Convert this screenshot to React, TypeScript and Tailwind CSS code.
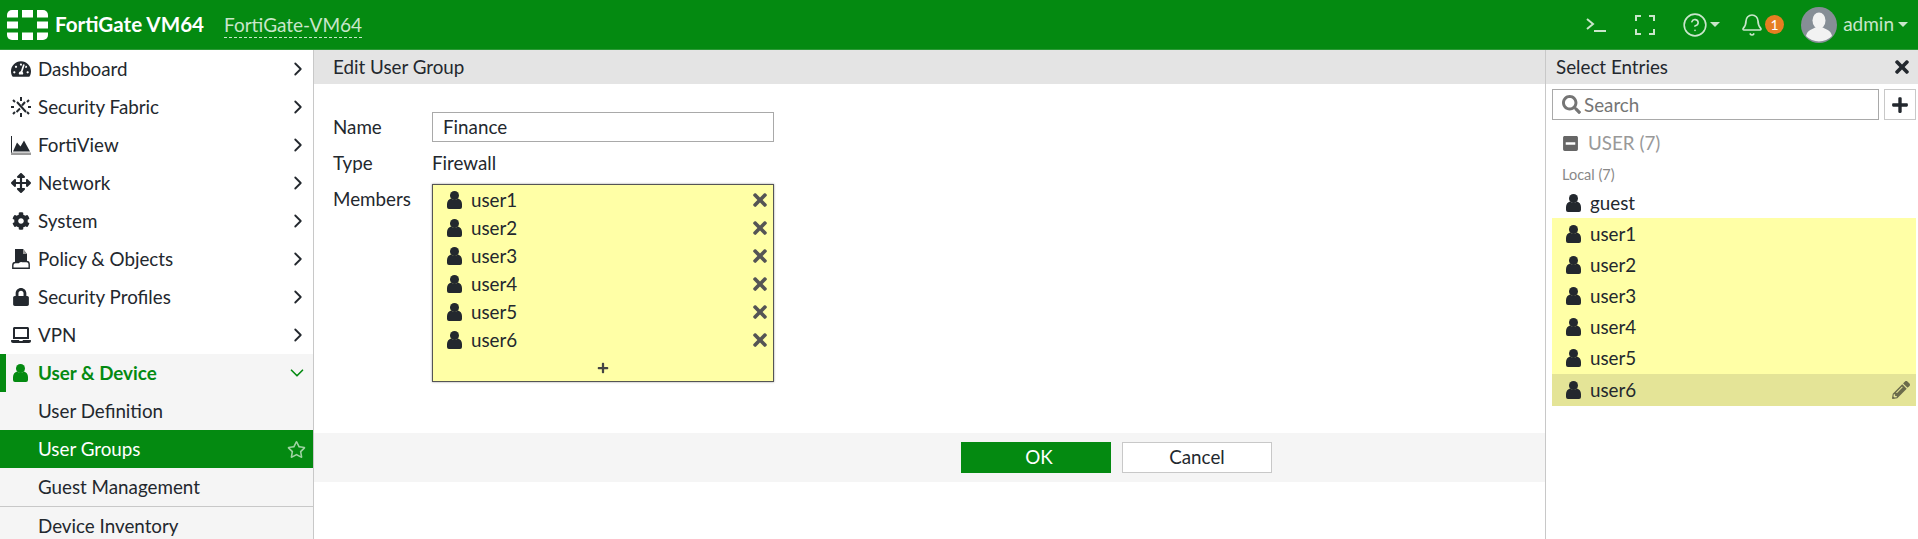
import {
  FaCog,
  FaLaptop,
  FaLock,
  FaMinusSquare,
  FaPencilAlt,
  FaPlus,
  FaSearch,
  FaTachometerAlt,
  FaTimes,
  FaArrowsAlt,
  FaRegStar,
} from 'react-icons/fa'
import { Bell, ChevronDown, ChevronRight, CircleHelp } from 'lucide-react'
import type { ReactNode } from 'react'

const users = ['user1', 'user2', 'user3', 'user4', 'user5', 'user6']

function Logo() {
  return (
    <svg width="41" height="30" viewBox="0 0 41 30" fill="#fff">
      <path d="M0 7.500V5a5 5 0 0 1 5-5h6v7.500z" />
      <rect x="15" y="0" width="11" height="7.500" />
      <path d="M30 0h6a5 5 0 0 1 5 5v2.500H30z" />
      <rect x="0" y="11.500" width="11" height="7" />
      <rect x="30" y="11.500" width="11" height="7" />
      <path d="M0 22.500h11V30H5a5 5 0 0 1-5-5z" />
      <rect x="15" y="22.500" width="11" height="7.500" />
      <path d="M30 22.500h11V25a5 5 0 0 1-5 5h-6z" />
    </svg>
  )
}

function UserIcon() {
  return (
    <svg width="15" height="18" viewBox="0 0 15 18" fill="currentColor" className="shrink-0">
      <circle cx="7.500" cy="4.500" r="4.500" />
      <path d="M0 16v-3c0-3 2-5 4-5.500 1 .8 2.200 1.200 3.500 1.200s2.500-.4 3.500-1.200c2 .5 4 2.500 4 5.500v3a2 2 0 0 1-2 2H2a2 2 0 0 1-2-2z" />
    </svg>
  )
}

function FabricIcon() {
  return (
    <svg width="20" height="20" viewBox="0 0 20 20" stroke="#23282e" strokeWidth="2" fill="none">
      <path d="M10 0v4M10 16v4M0 10h3M17 10h3M2 3l2 2M18 3l-2 2M2 17l2-2M18 17l-2-2M6 5l9 10M14 5l-3 3.500M9 11.500L5.500 15" />
    </svg>
  )
}

function AreaIcon() {
  return (
    <svg width="20" height="19" viewBox="0 0 20 19" fill="#23282e">
      <path d="M0 0h1v17H0z" />
      <path d="M0 16.500h20V19H0z" fill="#9a9a9a" />
      <path d="M2 15.500l4-9 3.500 4 3.500-6 6 11z" />
    </svg>
  )
}

function PolicyIcon() {
  return (
    <svg width="18" height="20" viewBox="0 0 18 20">
      <path d="M3 0h8l4 5v8H3z" fill="#23282e" />
      <path d="M11 0l4 5h-4z" fill="#9a9a9a" />
      <path d="M.8 19.200v-3q0-2.700 2.700-2.700h3q2-2 4-1h4q2.700 0 2.700 2.700v4z" fill="#fff" stroke="#23282e" strokeWidth="1.400" />
      <path d="M3 13h4q2-2 4-1h4v-2H3z" fill="#23282e" />
    </svg>
  )
}

function Avatar() {
  return (
    <svg width="36" height="36" viewBox="0 0 36 36" className="shrink-0">
      <circle cx="18" cy="18" r="18" fill="#868e96" />
      <ellipse cx="18" cy="13.500" rx="6.500" ry="8" fill="#f2f2f2" />
      <path d="M5 29c1-6 7-7 10-9h6c3 2 9 3 10 9a18 18 0 0 1-26 0z" fill="#f2f2f2" />
    </svg>
  )
}

function Caret() {
  return <span className="ml-[4px] h-0 w-0 border-x-[5px] border-t-[5px] border-x-transparent border-t-[#c9e6cb]" />
}

function NavRow({ icon, label }: { icon: ReactNode; label: string }) {
  return (
    <div className="flex h-[38px] items-center pr-[4px] pl-[11px]">
      <span className="flex w-[20px] justify-center">{icon}</span>
      <span className="ml-[7px] flex-1">{label}</span>
      <ChevronRight size={22} strokeWidth={2} />
    </div>
  )
}

function SubRow({ label, active }: { label: string; active?: boolean }) {
  return (
    <div className={active ? 'flex h-[38px] items-center bg-[#048a11] pr-[7px] pl-[38px] text-white' : 'flex h-[38px] items-center pl-[38px]'}>
      <span className="flex-1">{label}</span>
      {active && <FaRegStar size={19} className="text-[#9fd3a3]" />}
    </div>
  )
}

function EntryRow({ label, hover }: { label: string; hover?: boolean }) {
  return (
    <div className={hover ? 'flex h-[32px] items-center bg-[#e4e497] pr-[6px] pl-[14px]' : 'flex h-[31.200px] items-center bg-[#ffffa6] pr-[6px] pl-[14px]'}>
      <UserIcon />
      <span className="ml-[9px] flex-1">{label}</span>
      {hover && <FaPencilAlt size={18} className="text-[#6b6b4b]" />}
    </div>
  )
}

export default function App() {
  return (
    <div className="flex h-[539px] w-[1918px] flex-col overflow-hidden bg-white font-['Lato','Noto_Sans',sans-serif] text-[18.800px] text-[#23282e]">
      <header className="flex h-[50px] shrink-0 items-center border-b border-[#2c9a37] bg-[#048a11] pr-[10px] pl-[7px] text-white">
        <Logo />
        <span className="ml-[7px] text-[20.600px] font-bold">FortiGate VM64</span>
        <span className="ml-[20px] border-b border-dashed border-[#c9e6cb] text-[19px] leading-[25px] text-[#c9e6cb]">FortiGate-VM64</span>
        <div className="ml-auto flex items-center text-[#c9e6cb]">
          <svg width="20" height="14" viewBox="0 0 20 14" fill="none" stroke="currentColor" strokeWidth="2">
            <path d="M1 1l6 5-6 5M8 13h12" />
          </svg>
          <svg width="20" height="20" viewBox="0 0 20 20" fill="none" stroke="currentColor" strokeWidth="2" className="ml-[29px]">
            <path d="M1 6V1h5M14 1h5v5M19 14v5h-5M6 19H1v-5" />
          </svg>
          <CircleHelp size={26} strokeWidth={1.500} className="ml-[27px] -mr-[2px]" />
          <Caret />
          <Bell size={24} strokeWidth={1.700} className="ml-[20px] -mr-[1px]" />
          <span className="ml-[2px] flex h-[19px] w-[19px] items-center justify-center rounded-full bg-[#e67e22] text-[14px] text-white">1</span>
          <span className="ml-[17px]"><Avatar /></span>
          <span className="ml-[6px] text-[19px]">admin</span>
          <Caret />
        </div>
      </header>
      <div className="flex min-h-0 flex-1">
        <nav className="w-[314px] shrink-0 overflow-hidden border-r border-[#c8c8c8]">
          <NavRow icon={<FaTachometerAlt size={20} />} label="Dashboard" />
          <NavRow icon={<FabricIcon />} label="Security Fabric" />
          <NavRow icon={<AreaIcon />} label="FortiView" />
          <NavRow icon={<FaArrowsAlt size={20} />} label="Network" />
          <NavRow icon={<FaCog size={18} />} label="System" />
          <NavRow icon={<PolicyIcon />} label="Policy & Objects" />
          <NavRow icon={<FaLock size={18} />} label="Security Profiles" />
          <NavRow icon={<FaLaptop size={20} />} label="VPN" />
          <div className="bg-[#f5f5f5]">
            <div className="flex h-[38px] items-center border-l-[6px] border-[#048a11] pr-[5px] pl-[7px] font-bold text-[#048a11]">
              <UserIcon />
              <span className="ml-[10px] flex-1">User &amp; Device</span>
              <ChevronDown size={22} strokeWidth={1.800} />
            </div>
            <SubRow label="User Definition" />
            <SubRow label="User Groups" active />
            <div className="border-b border-[#c8c8c8]">
              <SubRow label="Guest Management" />
            </div>
            <SubRow label="Device Inventory" />
          </div>
        </nav>
        <main className="flex min-w-0 flex-1 flex-col">
          <div className="flex h-[34px] items-center bg-[#e4e4e4] pl-[19px]">Edit User Group</div>
          <div className="grid grid-cols-[99px_342px] gap-y-[7px] pt-[28px] pl-[19px]">
            <div className="pt-[1px]">Name</div>
            <div className="flex h-[30px] items-center border border-[#a9a9a9] pl-[10px]">Finance</div>
            <div className="leading-[27px]">Type</div>
            <div className="h-[28px] leading-[27px]">Firewall</div>
            <div className="pt-[1px]">Members</div>
            <div className="relative h-[198px] border border-[#555] bg-[#ffffa6] pt-[1px] pr-[3px] pl-[14px] shadow-[0_0_2px_#999]">
              {users.map((u) => (
                <div key={u} className="flex h-[28px] items-center">
                  <UserIcon />
                  <span className="ml-[9px] flex-1">{u}</span>
                  <FaTimes size={20} className="text-[#555]" />
                </div>
              ))}
              <div className="mr-[11px] flex justify-center pt-[8px]">
                <FaPlus size={12} className="text-[#444]" />
              </div>
            </div>
          </div>
          <div className="mt-[51px] flex h-[49px] items-center bg-[#f5f5f5] pl-[647px]">
            <button className="h-[31px] w-[150px] bg-[#048a11] pl-[6px] text-white">OK</button>
            <button className="ml-[11px] h-[31px] w-[150px] border border-[#c8c8c8] bg-white">Cancel</button>
          </div>
        </main>
        <aside className="w-[373px] shrink-0 border-l border-[#c8c8c8]">
          <div className="flex h-[34px] items-center justify-between bg-[#e4e4e4] pr-[6px] pl-[10px]">
            <span>Select Entries</span>
            <FaTimes size={20} />
          </div>
          <div className="mt-[5px] flex gap-[5px] pl-[6px]">
            <div className="flex h-[31px] w-[327px] items-center border border-[#a9a9a9] pl-[9px] text-[#757575]">
              <FaSearch size={19} />
              <span className="ml-[3px] pt-[1px]">Search</span>
            </div>
            <div className="flex h-[31px] w-[32px] items-center justify-center border border-[#c8c8c8]">
              <FaPlus size={18} />
            </div>
          </div>
          <div className="mt-[8px] flex h-[30px] items-center pl-[16px] text-[#999]">
            <FaMinusSquare size={17} className="text-[#666]" />
            <span className="ml-[9px]">USER (7)</span>
          </div>
          <div className="mt-[7px] mb-[3px] flex h-[20px] items-center pl-[16px] text-[14.500px] text-[#888]">Local (7)</div>
          <div className="mr-[2px] ml-[6px]">
            <div className="flex h-[30px] items-center pl-[14px]">
              <UserIcon />
              <span className="ml-[9px]">guest</span>
            </div>
            {users.slice(0, 5).map((u) => (
              <EntryRow key={u} label={u} />
            ))}
            <EntryRow label="user6" hover />
          </div>
        </aside>
      </div>
    </div>
  )
}
